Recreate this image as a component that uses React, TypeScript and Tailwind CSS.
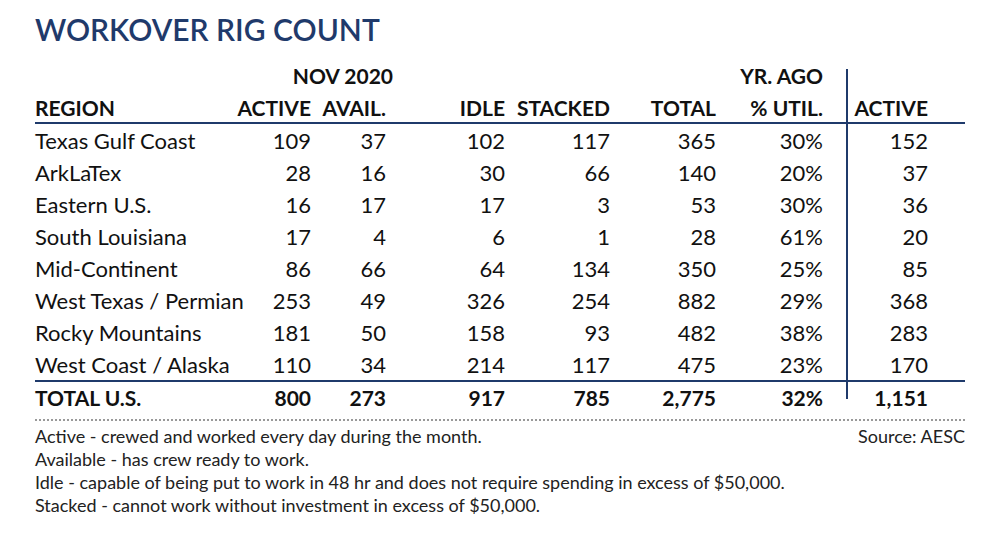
const rows = [
  ["Texas Gulf Coast", "109", "37", "102", "117", "365", "30%", "152"],
  ["ArkLaTex", "28", "16", "30", "66", "140", "20%", "37"],
  ["Eastern U.S.", "16", "17", "17", "3", "53", "30%", "36"],
  ["South Louisiana", "17", "4", "6", "1", "28", "61%", "20"],
  ["Mid-Continent", "86", "66", "64", "134", "350", "25%", "85"],
  ["West Texas / Permian", "253", "49", "326", "254", "882", "29%", "368"],
  ["Rocky Mountains", "181", "50", "158", "93", "482", "38%", "283"],
  ["West Coast / Alaska", "110", "34", "214", "117", "475", "23%", "170"],
];

const total = ["TOTAL U.S.", "800", "273", "917", "785", "2,775", "32%", "1,151"];

const cols = "grid grid-cols-[211px_65px_75px_119px_105px_106px_130px_119px]";

const Row = ({ cells, bold }: { cells: string[]; bold?: boolean }) => (
  <div className={`${cols} h-[32px] items-stretch ${bold ? "font-bold text-[21px]" : "text-[22px]"}`}>
    <div className="flex items-center">{cells[0]}</div>
    {cells.slice(1, 7).map((c, i) => (
      <div key={i} className={`flex items-center justify-end ${i === 5 ? "pr-[23px]" : ""}`}>
        {c}
      </div>
    ))}
    <div className="flex">
      <div className={`w-[2px] bg-[#1f3a6b] ${bold ? "h-[17px]" : ""}`} />
      <div className="flex-1 flex items-center justify-end pr-[37px]">{cells[7]}</div>
    </div>
  </div>
);

export default function App() {
  return (
    <div
      className="w-[1000px] h-[533px] bg-white px-[35px] text-[#111]"
      style={{ fontFamily: "Lato, 'Open Sans', sans-serif" }}
    >
      <div className="h-[60px] flex items-center pb-[2px]">
        <h1 className="text-[30px] font-semibold text-[#1f3a6b]">WORKOVER RIG COUNT</h1>
      </div>

      <div className="text-[21px]">
        <div className={`${cols} h-[32px] font-bold`}>
          <div />
          <div className="col-span-2 flex items-center justify-end">
            <span className="mr-[-7px]">NOV 2020</span>
          </div>
          <div />
          <div />
          <div />
          <div className="flex items-center justify-end pr-[23px]">YR. AGO</div>
          <div className="flex">
            <div className="w-[2px] bg-[#1f3a6b] mt-[9px]" />
          </div>
        </div>
        <div className={`${cols} h-[32px] font-bold border-b-2 border-[#1f3a6b]`}>
          <div className="flex items-center">REGION</div>
          <div className="flex items-center justify-end">ACTIVE</div>
          <div className="flex items-center justify-end">AVAIL.</div>
          <div className="flex items-center justify-end">IDLE</div>
          <div className="flex items-center justify-end">STACKED</div>
          <div className="flex items-center justify-end">TOTAL</div>
          <div className="flex items-center justify-end pr-[23px]">% UTIL.</div>
          <div className="flex">
            <div className="w-[2px] bg-[#1f3a6b]" />
            <div className="flex-1 flex items-center justify-end pr-[37px]">ACTIVE</div>
          </div>
        </div>
        {rows.map((r) => (
          <Row key={r[0]} cells={r} />
        ))}
        <div className="border-t-2 border-[#1f3a6b]">
          <Row cells={total} bold />
        </div>
      </div>

      <div className="mt-[5px] border-t-2 border-dotted border-[#999]" />

      <div className="pt-[4px] text-[18px] leading-[23px] text-[#222]">
        <div className="flex justify-between">
          <span>Active - crewed and worked every day during the month.</span>
          <span>Source: AESC</span>
        </div>
        <div>Available - has crew ready to work.</div>
        <div>Idle - capable of being put to work in 48 hr and does not require spending in excess of $50,000.</div>
        <div>Stacked - cannot work without investment in excess of $50,000.</div>
      </div>
    </div>
  );
}
